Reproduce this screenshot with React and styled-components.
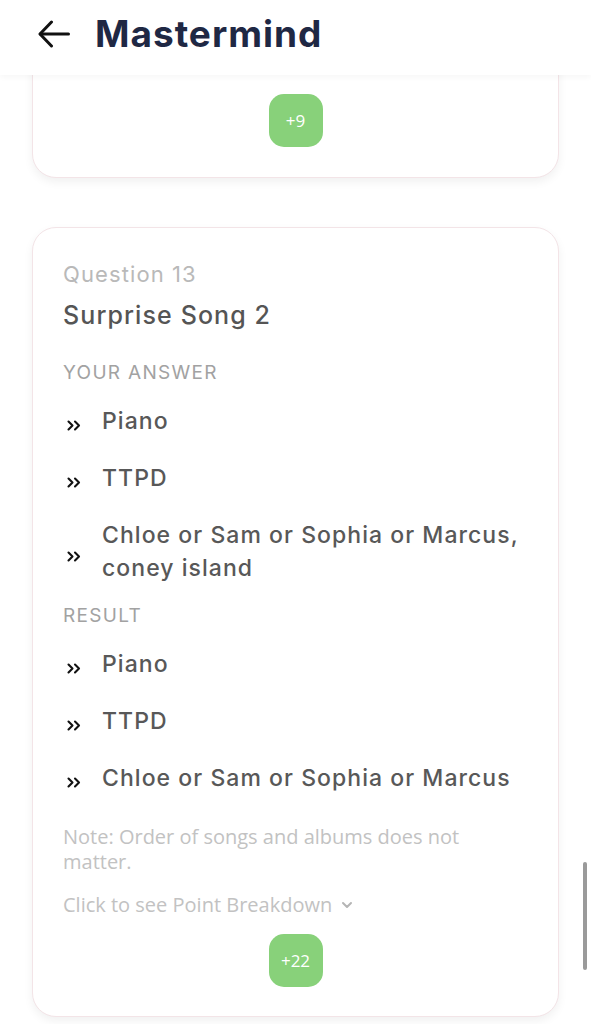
import React from 'react'
import styled, { createGlobalStyle } from 'styled-components'

const Global = createGlobalStyle`
  html, body {
    margin: 0;
    padding: 0;
    background: #ffffff;
  }
  body {
    font-family: Inter, "Noto Sans", sans-serif;
  }
`

const Screen = styled.div`
  position: relative;
  width: 591px;
  height: 1024px;
  overflow: hidden;
  display: flex;
  flex-direction: column;
  background: #fff;
`

const Header = styled.header`
  position: relative;
  z-index: 2;
  height: 75px;
  flex: none;
  display: flex;
  align-items: center;
  gap: 25px;
  padding: 0 0 8px 38px;
  box-sizing: border-box;
  background: #fff;
  box-shadow: 0 2px 6px rgba(0, 0, 0, 0.04);
`

const BackButton = styled.button`
  border: 0;
  background: none;
  padding: 0;
  display: flex;
  align-items: center;
  color: #111;
  cursor: pointer;
`

const Title = styled.h1`
  margin: 0;
  font-family: Inter, "Noto Sans", sans-serif;
  font-weight: 700;
  font-size: 37px;
  letter-spacing: 1px;
  color: #1f2844;
`

const Feed = styled.main`
  flex: 1;
  overflow: hidden;
  display: flex;
  flex-direction: column;
  gap: 49px;
  padding: 0 32px;
`

const Card = styled.section`
  background: #fff;
  border: 1px solid #f3e4e7;
  border-radius: 24px;
  box-shadow: 0 4px 10px rgba(0, 0, 0, 0.06);
  padding: ${p => (p.$clipped ? '58px 30px 30px' : '32px 30px 29px')};
  margin-top: ${p => (p.$clipped ? '-40px' : '0')};
  display: flex;
  flex-direction: column;
  flex: none;
`

const Label = styled.div`
  font-size: 22px;
  letter-spacing: 1.1px;
  color: #b9b9b9;
  line-height: 28px;
`

const Heading = styled.h2`
  margin: 10px 0 0;
  font-size: 25px;
  font-weight: 500;
  letter-spacing: 1.1px;
  color: #555;
  line-height: 34px;
`

const Section = styled.div`
  margin-top: ${p => p.$top}px;
  font-size: 19px;
  letter-spacing: 1.3px;
  color: #a2a2a2;
  line-height: 26px;
  text-transform: uppercase;
`

const List = styled.ul`
  list-style: none;
  margin: 19px 0 0;
  padding: 0;
  display: flex;
  flex-direction: column;
  gap: 24px;
`

const Item = styled.li`
  display: flex;
  align-items: center;
  gap: 21px;
  font-size: 23px;
  font-weight: 500;
  letter-spacing: 1.05px;
  color: #585858;
  line-height: 33px;
`

const Chevrons = styled.svg`
  flex: none;
  margin-left: 4px;
  position: relative;
  top: 4px;
`

const Note = styled.p`
  margin: 29px 0 0;
  font-family: "Open Sans", sans-serif;
  font-size: 20px;
  line-height: 25px;
  color: #c2c2c2;
`

const Toggle = styled.div`
  margin-top: 19px;
  display: flex;
  align-items: center;
  gap: 9px;
  font-family: "Open Sans", sans-serif;
  font-size: 20px;
  line-height: 24px;
  color: #c2c2c2;
`

const Badge = styled.div`
  align-self: center;
  margin-top: ${p => p.$top || 0}px;
  width: 54px;
  height: 53px;
  border-radius: 15px;
  background: #88d17a;
  color: #fff;
  display: flex;
  align-items: center;
  justify-content: center;
  font-family: "Open Sans", sans-serif;
  font-size: 17px;
`

const Scrollbar = styled.div`
  position: absolute;
  right: 4px;
  top: 862px;
  width: 4px;
  height: 108px;
  border-radius: 2px;
  background: #9a9a9a;
`

const answers = ['Piano', 'TTPD', 'Chloe or Sam or Sophia or Marcus, coney island']
const results = ['Piano', 'TTPD', 'Chloe or Sam or Sophia or Marcus']

function Entries({ items }) {
  return (
    <List>
      {items.map(text => (
        <Item key={text}>
          <Chevrons width="14" height="11" viewBox="0 0 14 11" fill="none" stroke="#111" strokeWidth="2.1" strokeLinecap="round" strokeLinejoin="round">
            <path d="M1.5 1.5l4 4-4 4" />
            <path d="M8 1.5l4 4-4 4" />
          </Chevrons>
          <span>{text}</span>
        </Item>
      ))}
    </List>
  )
}

export default function App() {
  return (
    <Screen>
      <Global />
      <Header>
        <BackButton aria-label="Back">
          <svg width="32" height="28" viewBox="0 0 32 28" fill="none" stroke="currentColor" strokeWidth="3" strokeLinecap="round" strokeLinejoin="round">
            <path d="M30.5 14H2.5" />
            <path d="M13.5 2L2 14l11.5 12" />
          </svg>
        </BackButton>
        <Title>Mastermind</Title>
      </Header>
      <Feed>
        <Card $clipped>
          <Badge>+9</Badge>
        </Card>
        <Card>
          <Label>Question 13</Label>
          <Heading>Surprise Song 2</Heading>
          <Section $top={28}>Your Answer</Section>
          <Entries items={answers} />
          <Section $top={18}>Result</Section>
          <Entries items={results} />
          <Note>Note: Order of songs and albums does not matter.</Note>
          <Toggle>
            Click to see Point Breakdown
            <svg width="12" height="8" viewBox="0 0 12 8" fill="none" stroke="#b5b5b5" strokeWidth="2" strokeLinecap="round" strokeLinejoin="round">
              <path d="M2 2l4 4 4-4" />
            </svg>
          </Toggle>
          <Badge $top={17}>+22</Badge>
        </Card>
      </Feed>
      <Scrollbar />
    </Screen>
  )
}
